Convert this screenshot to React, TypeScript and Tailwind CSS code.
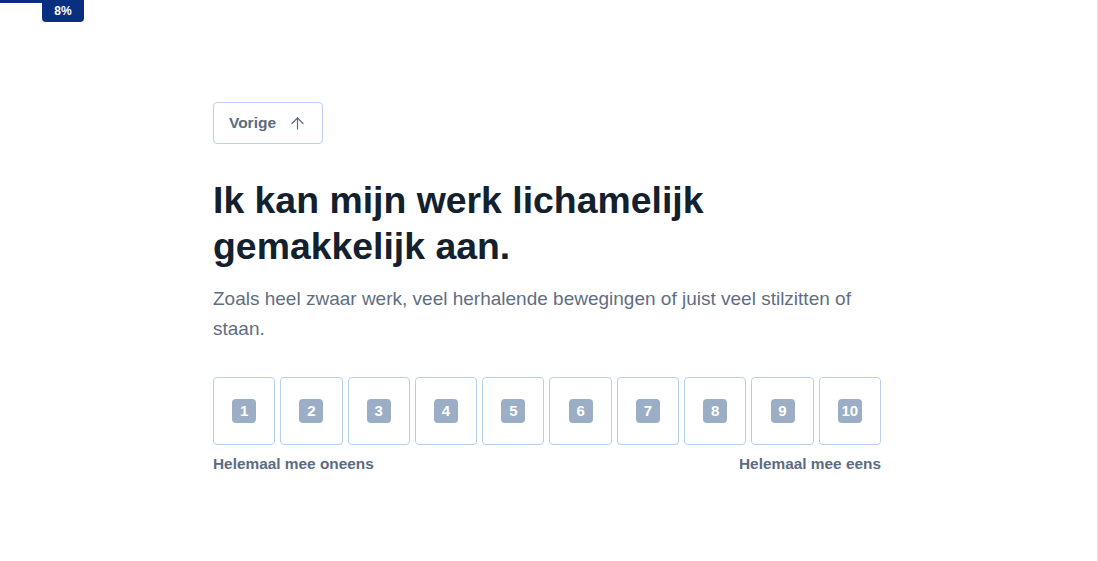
import { ArrowUp } from 'lucide-react'

const options = [1, 2, 3, 4, 5, 6, 7, 8, 9, 10]

const App = () => {
  return (
    <div
      className="relative h-[561px] w-full overflow-hidden bg-white border-r border-[#e3e3e3]"
      style={{ fontFamily: '"Liberation Sans", Arial, sans-serif' }}
    >
      {/* Progress */}
      <div className="absolute left-0 top-0 h-[3px] w-[42px] bg-[#0b2f80]" />
      <div className="absolute left-[42px] top-0 flex h-[22px] w-[42px] items-center justify-center rounded-b-[4px] bg-[#0b2f80] text-[12px] font-bold text-white">
        8%
      </div>

      <div className="ml-[213px] w-[668px] pt-[102px]">
        <button className="flex h-[42px] w-[110px] items-center justify-center gap-[12px] rounded-[4px] border border-[#b9d1ee] bg-white text-[15.5px] font-bold text-[#5d6b80]">
          Vorige
          <ArrowUp size={19} strokeWidth={1.5} />
        </button>

        <h1 className="mt-[33px] text-[37.4px] font-bold leading-[46px] text-[#13212f]">
          Ik kan mijn werk lichamelijk
          <br />
          gemakkelijk aan.
        </h1>

        <p className="mt-[15px] text-[19px] leading-[30px] text-[#5f6e84]">
          Zoals heel zwaar werk, veel herhalende bewegingen of juist veel stilzitten of staan.
        </p>

        <div className="mt-[33px] flex gap-[5px]">
          {options.map((n) => (
            <div
              key={n}
              className="flex h-[68px] w-[62.7px] items-center justify-center rounded-[4px] border border-[#b6cfee] bg-white"
            >
              <span className="flex h-[24px] min-w-[24px] items-center justify-center rounded-[4px] bg-[#9caec5] px-[3px] text-[15px] font-bold text-white">
                {n}
              </span>
            </div>
          ))}
        </div>

        <div className="mt-[7px] flex justify-between text-[15.4px] font-bold text-[#5d6b80]">
          <span>Helemaal mee oneens</span>
          <span>Helemaal mee eens</span>
        </div>
      </div>
    </div>
  )
}

export default App
